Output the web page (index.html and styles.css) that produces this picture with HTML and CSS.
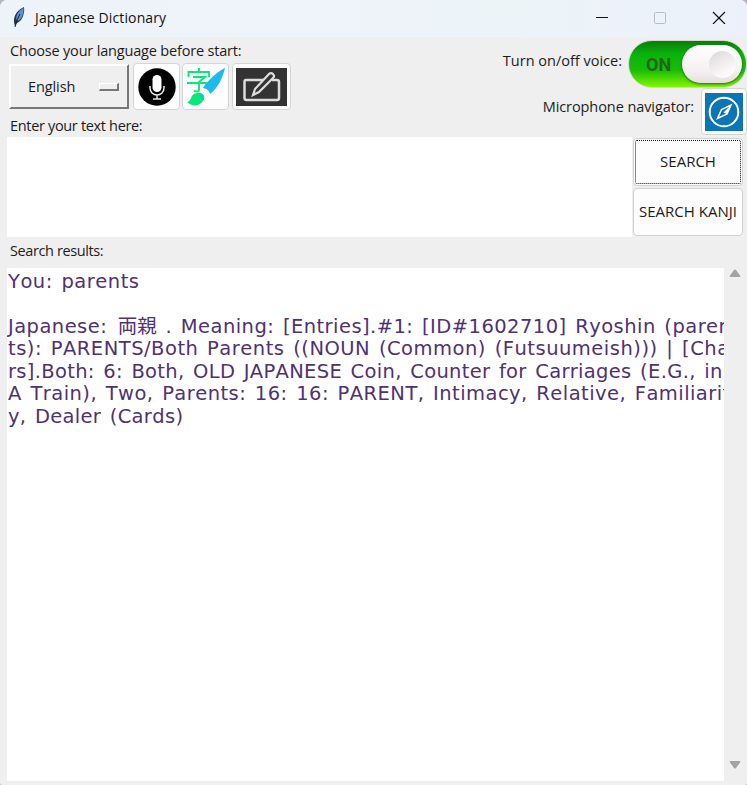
FILE: index.html
```html
<!DOCTYPE html>
<html lang="en">
<head>
<meta charset="utf-8">
<title>Japanese Dictionary</title>
<link rel="stylesheet" href="styles.css">
</head>
<body>
<div class="window">
  <header class="titlebar">
    <svg class="feather" width="14" height="22" viewBox="0 0 14 22"><path d="M3 20C0 13 3 5 12 1C13 8 10 15 5 17Z" fill="#263848"/><path d="M4 13C4.500 7 8 4 11.500 2C12 7 10 13 6 15Z" fill="#5d93d2"/><path d="M3 21L5 14L8 8" fill="none" stroke="#17232d"/></svg>
    <span class="title">Japanese Dictionary</span>
    <svg class="controls" width="132" height="14" viewBox="0 0 132 14"><path d="M0 7.500H12" stroke="#111"/><rect x="58.500" y="2.500" width="11" height="11" rx="1" fill="none" stroke="#b9bec3"/><path d="M117 2L129 14M129 2L117 14" stroke="#111" stroke-width="1.200"/></svg>
  </header>
  <section class="toolbar">
    <div class="language">
      <div class="label choose">Choose your language before start:</div>
      <div class="tools">
        <div class="dropdown"><span>English</span><i class="indicator"></i></div>
        <button class="icon-button mic"><svg width="38" height="38" viewBox="0 0 38 38"><circle cx="19" cy="19" r="18.700" fill="#000"/><rect x="14.500" y="7" width="9" height="17" rx="4.500" fill="#fff"/><path d="M12 18v2a7 7 0 0 0 14 0v-2M19 27v4M15 31h8" fill="none" stroke="#e5e5e5" stroke-width="1.500"/></svg></button>
        <button class="icon-button kanji"><svg width="38" height="38" viewBox="0 0 38 38"><path d="M12 0V4M1.500 9V4H22V9M6 9H18L12 14V22Q12 24 7 23M0 15H23" fill="none" stroke="#08e879" stroke-width="1.900"/><path d="M38 0C31 3 20 13 16 20Q22 21 23 26C31 20 36 9 38 0Z" fill="#20b9ec"/><path d="M0 34C5 34 3 25 10 25C15 24 19 28 16 33C13 38 5 39 0 34Z" fill="#08e879"/><path d="M12 25Q19 26 17 32Q13 31 12 25Z" fill="#14cfad"/></svg></button>
        <button class="icon-button draw"><svg width="51" height="38" viewBox="0 0 51 38"><path d="M0 0H51V38H0Z" fill="#333"/><path d="M29 12H10Q8.500 12 8.500 14V30Q8.500 32 10.500 32H41Q43 32 43 30V14Q43 12 41 12H36" fill="none" stroke="#ddd" stroke-width="2.500"/><path d="M17 27L19 21L33 6Q35 4 37 6Q39 8 37 10L23 24Z" fill="#333" stroke="#ddd" stroke-width="2.200"/></svg></button>
      </div>
      <div class="label enter">Enter your text here:</div>
    </div>
    <div class="voice">
      <div class="voice-row"><span class="label turn">Turn on/off voice:</span><div class="toggle"><span>ON</span><div class="knob"><i></i></div></div></div>
      <div class="mic-row"><span class="label nav">Microphone navigator:</span><button class="icon-button compass"><svg width="38" height="38" viewBox="0 0 38 38"><path d="M0 0H38V38H0Z" fill="#0b75b5"/><circle cx="19" cy="19" r="14.300" fill="none" stroke="#fff" stroke-width="2"/><path d="M26 12L22 21L12.500 25.500L16.500 16.500Z" fill="none" stroke="#fff" stroke-width="1.500"/><path d="M26 12L18.500 19.500L22 21Z" fill="#fff"/></svg></button></div>
    </div>
  </section>
  <section class="query">
    <div class="input"></div>
    <div class="actions"><button class="action focused">SEARCH</button><button class="action">SEARCH KANJI</button></div>
  </section>
  <div class="label results-label">Search results:</div>
  <section class="results">
    <div class="output">
      <div class="line">You: parents</div>
      <div class="line">&nbsp;</div>
      <div class="line close">Japanese: <span class="jp">両親</span> . Meaning: [Entries].#1: [ID#1602710] Ryoshin (paren</div>
      <div class="line">ts): PARENTS/Both Parents ((NOUN (Common) (Futsuumeish))) | [Cha</div>
      <div class="line tight">rs].Both: 6: Both, OLD JAPANESE Coin, Counter for Carriages (E.G., in</div>
      <div class="line close">A Train), Two, Parents: 16: 16: PARENT, Intimacy, Relative, Familiarit</div>
      <div class="line tight">y, Dealer (Cards)</div>
    </div>
    <div class="scrollbar"><svg width="12" height="9" viewBox="0 0 12 9"><path d="M1.500 8Q0 8 1 6.500L5 1Q6 0 7 1L11 6.500Q12 8 10.500 8Z" fill="#a3a3a3"/></svg><svg width="12" height="9" viewBox="0 0 12 9"><path d="M1.500 1Q0 1 1 2.500L5 8Q6 9 7 8L11 2.500Q12 1 10.500 1Z" fill="#a3a3a3"/></svg></div>
  </section>
</div>
</body>
</html>
```
FILE: styles.css
```css
* { box-sizing: border-box; }
body { margin: 0; background: #b5b5b5; }
button { padding: 0; font: inherit; color: inherit; }
svg { display: block; }
.window { width: 747px; height: 785px; overflow: hidden; display: flex; flex-direction: column; background: #efefef; border-radius: 7px 7px 2px 2px; font: 14.5px/18px "Open Sans", sans-serif; color: #1c1c1c; }
.titlebar { height: 37px; display: flex; align-items: center; padding: 0 21px 0 12px; background: linear-gradient(90deg, #eef3fa, #edf4f8 70%, #ebf0fa); color: #111; }
.feather { margin-top: -4px; }
.title { margin: -2px auto 0 9px; font-size: 14px; letter-spacing: .12px; white-space: nowrap; }
.controls { margin: -4px -2px 0 0; }
.toolbar { height: 100px; display: flex; justify-content: space-between; }
.label { white-space: nowrap; }
.language { padding-left: 9px; }
.language .label { margin-left: 1px; }
.choose { height: 27px; padding-top: 5px; letter-spacing: -.18px; }
.tools { display: flex; height: 46px; }
.dropdown { width: 120px; height: 45px; margin: 0 4px 0 0; padding: 0 8px 0 17px; display: flex; align-items: center; justify-content: space-between; border: 2px solid; border-color: #fdfdfd #777 #777 #fdfdfd; letter-spacing: -.1px; }
.indicator { width: 20px; height: 8px; border: 1px solid; border-color: #fff #777 #777 #fff; border-width: 1px 2px 2px 1px; }
.icon-button { width: 47px; height: 47px; border: 1px solid #d5d5d5; border-radius: 4px; background: #fdfdfd; display: flex; align-items: center; justify-content: center; flex: none; }
.tools .icon-button { margin-top: -1px; }
.kanji { margin-left: 2px; }
.draw { width: 59px; margin-left: 3px; }
.enter { padding-top: 7px; letter-spacing: -.33px; }
.voice { display: flex; flex-direction: column; align-items: flex-end; }
.voice-row { height: 51px; display: flex; align-items: flex-start; }
.turn { margin: 15px 6px 0 0; }
.toggle { width: 119px; height: 48px; margin-top: 3px; padding: 4px 4px 4px 17px; border: 1px solid #d6d8d2; border-radius: 24px; background: linear-gradient(#087e08, #08b50b 30%, #19bc08 63%, #82f600); display: flex; align-items: center; justify-content: space-between; color: #216713; font: bold 18px Roboto, sans-serif; }
.knob { width: 60px; height: 38px; padding-right: 6px; border-radius: 19px; background: linear-gradient(#fff, #f5f1f2 65%, #e5e0df); box-shadow: 0 1px 3px #235b17; display: flex; align-items: center; justify-content: flex-end; }
.knob i { width: 27px; height: 27px; border-radius: 50%; background: linear-gradient(150deg, #d9d6d7, #f8f5f7 65%, #fff); }
.mic-row { display: flex; }
.nav { margin: 10px 7px 0 0; letter-spacing: -.08px; }
.compass { width: 46px; }
.query { height: 100px; padding-left: 7px; display: flex; }
.input { width: 625px; background: #fff; }
.actions { display: flex; flex-direction: column; gap: 2px; padding: 1px 0 0 1px; }
.action { width: 110px; height: 48px; padding-bottom: 2px; border: 1px solid #d1d1d1; border-radius: 4px; background: #fdfdfd; font-size: 15px; white-space: nowrap; display: flex; align-items: center; justify-content: center; }
.focused { outline: 1px dotted #111; outline-offset: -3px; }
.results-label { height: 31px; padding: 5px 0 0 10px; letter-spacing: -.4px; }
.results { height: 513px; margin-left: 7px; display: flex; }
.output { width: 718px; overflow: hidden; background: #fff; padding: 2.8px 0 0 1px; font: 19.5px/22.5px "DejaVu Sans", "Noto Sans CJK JP", sans-serif; font-kerning: none; letter-spacing: .5px; word-spacing: 2px; color: #4f3274; }
.line { height: 22.5px; white-space: pre; }
.close { letter-spacing: .45px; }
.tight { letter-spacing: .32px; }
.jp { margin-left: 2px; font-family: "Noto Sans CJK JP", sans-serif; font-size: 19.5px; font-weight: 400; line-height: 1px; letter-spacing: 0; }
.scrollbar { flex: 1; display: flex; flex-direction: column; justify-content: space-between; padding: 1px 6px 12px 5px; }
```
